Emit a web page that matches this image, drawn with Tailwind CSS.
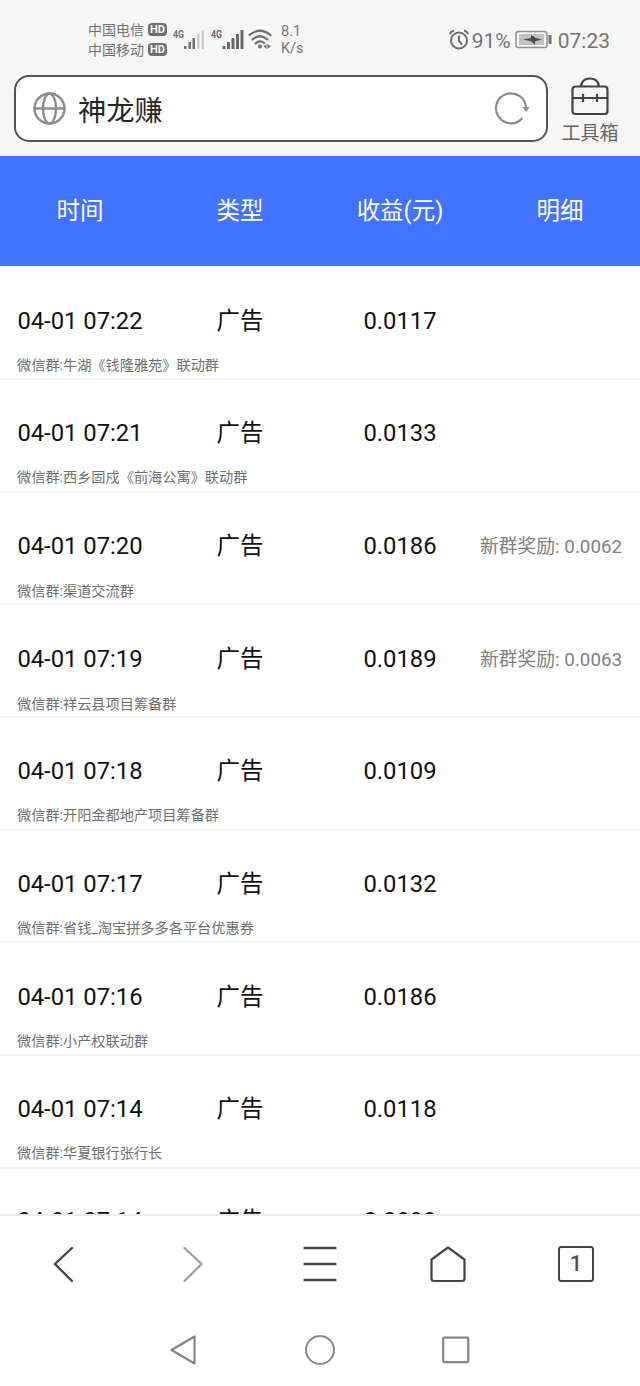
<!DOCTYPE html>
<html lang="zh-CN">
<head>
    <meta charset="UTF-8">
    <meta name="viewport" content="width=device-width, initial-scale=1.0">
    <title>神龙赚</title>
    <script src="https://cdn.jsdelivr.net/npm/@tailwindcss/browser@4"></script>
</head>
<body class="bg-white font-[Roboto,'Noto_Sans_CJK_SC',sans-serif]">
    <div class="flex h-[1386px] w-[640px] flex-col overflow-hidden">

        <!-- Status bar -->
        <div class="flex h-[74px] shrink-0 items-center bg-[#f6f6f6] pt-[5px] pr-[30px] pl-[88px] text-[#747474]">
            <div class="flex flex-col text-[14px] leading-[20px]">
                <div class="flex items-center gap-[4px]">中国电信<span class="flex h-[13px] w-[19px] items-center justify-center rounded-[4px] bg-[#707070] text-[11px] font-bold text-[#f6f6f6]">HD</span></div>
                <div class="flex items-center gap-[4px]">中国移动<span class="flex h-[13px] w-[19px] items-center justify-center rounded-[4px] bg-[#707070] text-[11px] font-bold text-[#f6f6f6]">HD</span></div>
            </div>
            <svg class="ml-[5px]" width="34" height="24" viewBox="0 0 34 24" fill="#707070">
                <text x="1" y="10" font-size="11" font-weight="700" textLength="11" lengthAdjust="spacingAndGlyphs">4G</text>
                <path d="M12 18h2.500v3H12zM16.500 14H19v7h-2.500zM20.500 10H23v11h-2.500z"/>
                <path fill="#cfcfcf" d="M25 6h2.500v15H25zM29.500 2H32v19h-2.500z"/>
            </svg>
            <svg class="ml-[5px]" width="34" height="24" viewBox="0 0 34 24" fill="#686868">
                <text x="0" y="10" font-size="11" font-weight="700" textLength="11" lengthAdjust="spacingAndGlyphs">4G</text>
                <path d="M11.500 18h3v3h-3zM16 14h3v7h-3zM20.500 10h3v11h-3zM25 6h3v15h-3zM29.500 2h3v19h-3z"/>
            </svg>
            <svg class="ml-[3px]" width="24" height="24" viewBox="0 0 24 24" fill="none" stroke="#707070" stroke-width="2.200" stroke-linecap="round">
                <path d="M1.500 7Q12 -1.500 22.500 7M4.500 11.500Q12 5 19.500 11.500M7.500 15.500Q12 11.500 16 15"/>
                <circle cx="12" cy="18.500" r="2" fill="#707070" stroke="none"/>
                <path fill="#707070" stroke="none" d="M15.500 18.500l3-2.500v5zM19.500 16l3.500 2.500-3.500 2.500z"/>
            </svg>
            <div class="ml-[9px] text-[14.5px] leading-[17px]">8.1<br>K/s</div>
            <svg class="ml-auto" width="22" height="22" viewBox="0 0 22 22" fill="none" stroke="#6c6c6c" stroke-width="2">
                <circle cx="11" cy="11.500" r="8"/>
                <path d="M1.800 5Q3 2.300 6 1.500M20.200 5Q19 2.300 16 1.500M11 6.500V12l3 3.500"/>
            </svg>
            <span class="ml-[2px] pt-[2px] text-[21px] leading-6">91%</span>
            <svg class="mr-px ml-[4px]" width="38" height="20" viewBox="0 0 38 20">
                <rect x="1" y="1.500" width="31" height="16" rx="2.500" fill="none" stroke="#8f8f8f" stroke-width="1.500"/>
                <rect x="4" y="4" width="25" height="11" fill="#c0c0c0"/>
                <path fill="#4c4c4c" d="M8 9.500l8-1.500V5l5 3 6 1.500-7 1.800V14.500l-4-3.300z"/>
                <path fill="#707070" d="M33.500 5h3v9h-3z"/>
            </svg>
            <span class="ml-[4px] pt-[2px] text-[21px] leading-6">07:23</span>
        </div>

        <!-- Address bar -->
        <div class="flex h-[82px] shrink-0 bg-[#f6f6f6] pl-[14px]">
            <div class="mt-px flex h-[67px] w-[534px] items-center rounded-[15px] border-2 border-[#555] bg-white pr-[16px] pl-[17px]">
                <svg width="34" height="34" viewBox="0 0 34 34" fill="none" stroke="#8c8c8c" stroke-width="2.400">
                    <circle cx="16.500" cy="16.500" r="15"/>
                    <ellipse cx="16.500" cy="16.500" rx="6.500" ry="15"/>
                    <path d="M1.500 16.500h30"/>
                </svg>
                <span class="mt-[6px] ml-[11px] text-[28.3px] leading-9 text-[#262626]">神龙赚</span>
                <svg class="ml-auto" width="36" height="34" viewBox="0 0 36 34" fill="none" stroke="#8c8c8c" stroke-width="2.200">
                    <path d="M28.500 26A15 15 0 1 1 32 16"/>
                    <path fill="#8c8c8c" stroke="none" d="M28.500 15h7l-3.300 5z"/>
                </svg>
            </div>
            <div class="ml-[13px] flex w-[58px] flex-col items-center pt-[2px]">
                <svg width="38" height="40" viewBox="0 0 38 40" fill="none" stroke="#444" stroke-width="2.200">
                    <rect x="1.500" y="10.500" width="35" height="27.500" rx="3"/>
                    <path d="M10 10.500Q11 2.500 19 2.500T28 10.500M2 22h34M12 18v8M26 18v8"/>
                </svg>
                <span class="mt-[7px] text-[19px] leading-[22px] whitespace-nowrap text-[#666]">工具箱</span>
            </div>
        </div>

        <!-- Table header -->
        <div class="grid h-[110px] shrink-0 grid-cols-4 bg-[#4273ff] pt-[37px] text-center text-[23.5px] leading-[36px] text-white">
            <div>时间</div>
            <div>类型</div>
            <div>收益(元)</div>
            <div>明细</div>
        </div>

        <!-- Income records -->
        <div id="records" class="min-h-0 flex-1 overflow-hidden pt-[1.2px]"></div>

        <!-- Browser toolbar -->
        <div class="grid h-[99px] shrink-0 grid-cols-5 place-items-center border-t-2 border-[#ebebeb] bg-white pb-px">
            <svg width="40" height="40" viewBox="0 0 40 40" fill="none" stroke="#444" stroke-width="2.300" stroke-linecap="round"><path d="M28 4L11 20l17 17"/></svg>
            <svg width="40" height="40" viewBox="0 0 40 40" fill="none" stroke="#a0a0a0" stroke-width="2.300" stroke-linecap="round"><path d="M12.500 4l17 16-17 17"/></svg>
            <svg width="40" height="40" viewBox="0 0 40 40" fill="none" stroke="#444" stroke-width="2.300" stroke-linecap="round"><path d="M4.500 4h31M4.500 20h31M4.500 36h31"/></svg>
            <svg width="40" height="40" viewBox="0 0 40 40" fill="none" stroke="#444" stroke-width="2.200" stroke-linejoin="round"><path d="M20 3.500L36.500 15.500V34.500a2.500 2.500 0 0 1-2.500 2.500H6A2.500 2.500 0 0 1 3.500 34.500V15.500z"/></svg>
            <div class="flex h-9 w-9 items-center justify-center rounded-[3px] border-2 border-[#444] text-[22px] leading-none font-medium text-[#555]">1</div>
        </div>

        <!-- System navigation -->
        <div class="flex h-[73px] shrink-0 justify-center gap-[104px] bg-white pt-[21px]">
            <svg width="32" height="32" viewBox="0 0 32 32" fill="none" stroke="#868686" stroke-width="2.200" stroke-linejoin="round"><path d="M26.500 2.500v27L3.500 16z"/></svg>
            <svg width="32" height="32" viewBox="0 0 32 32" fill="none" stroke="#868686" stroke-width="2"><circle cx="16" cy="16" r="14"/></svg>
            <svg width="32" height="32" viewBox="0 0 32 32" fill="none" stroke="#868686" stroke-width="2.200"><rect x="3.200" y="3.700" width="25" height="24.500" rx="1"/></svg>
        </div>
    </div>

    <script>
        const records = [
            { time: '04-01 07:22', amount: '0.0117', group: '牛湖《钱隆雅苑》联动群' },
            { time: '04-01 07:21', amount: '0.0133', group: '西乡固戍《前海公寓》联动群' },
            { time: '04-01 07:20', amount: '0.0186', group: '渠道交流群', bonus: '0.0062' },
            { time: '04-01 07:19', amount: '0.0189', group: '祥云县项目筹备群', bonus: '0.0063' },
            { time: '04-01 07:18', amount: '0.0109', group: '开阳金都地产项目筹备群' },
            { time: '04-01 07:17', amount: '0.0132', group: '省钱_淘宝拼多多各平台优惠券' },
            { time: '04-01 07:16', amount: '0.0186', group: '小产权联动群' },
            { time: '04-01 07:14', amount: '0.0118', group: '华夏银行张行长' },
            { time: '04-01 07:14', amount: '0.0099' }
        ];

        document.getElementById('records').innerHTML = records.map(r => `
            <div class="h-[112.7px] border-b-2 border-[#f5f5f5] pt-[35.4px] last:pt-[34.2px]">
                <div class="grid grid-cols-4 text-center text-[23.5px] leading-[36px] text-[#111]">
                    <div class="text-[23.8px] whitespace-nowrap">${r.time}</div>
                    <div>广告</div>
                    <div class="text-[23.8px]">${r.amount}</div>
                    <div class="pt-px pr-[18px] text-right text-[18.8px] whitespace-nowrap text-[#808080]">${r.bonus ? `新群奖励: ${r.bonus}` : ''}</div>
                </div>
                ${r.group ? `<div class="mt-[16px] pl-[17px] text-[14.2px] leading-[20px] text-[#707070]">微信群:${r.group}</div>` : ''}
            </div>
        `).join('');
    </script>
</body>
</html>
